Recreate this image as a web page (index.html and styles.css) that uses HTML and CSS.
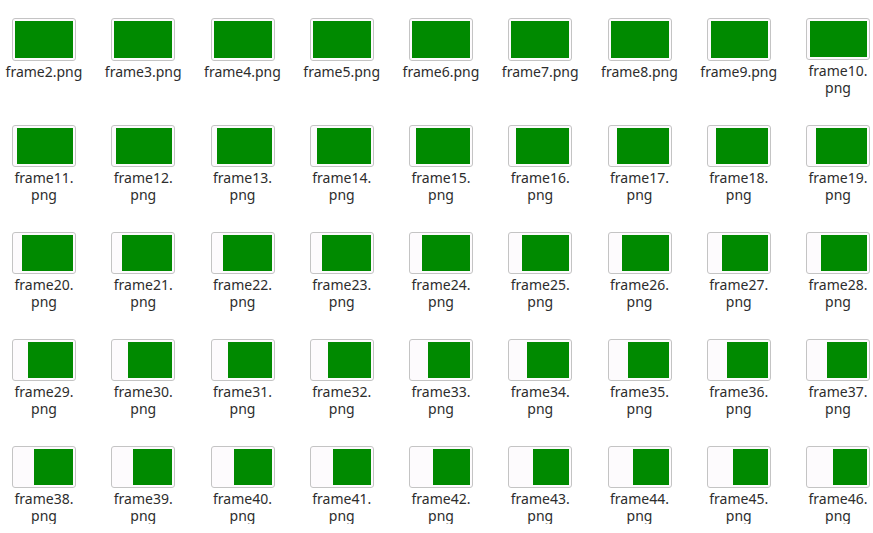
FILE: index.html
```html
<!DOCTYPE html>
<html>
<head>
<meta charset="utf-8">
<link rel="stylesheet" href="styles.css">
</head>
<body>
<div class="grid">
<div class="item"><div class="thumb"><span class="blank" style="width:0px"></span><span class="fill"></span></div><div class="label">frame2.png</div></div>
<div class="item"><div class="thumb"><span class="blank" style="width:0px"></span><span class="fill"></span></div><div class="label">frame3.png</div></div>
<div class="item"><div class="thumb"><span class="blank" style="width:0px"></span><span class="fill"></span></div><div class="label">frame4.png</div></div>
<div class="item"><div class="thumb"><span class="blank" style="width:0px"></span><span class="fill"></span></div><div class="label">frame5.png</div></div>
<div class="item"><div class="thumb"><span class="blank" style="width:0px"></span><span class="fill"></span></div><div class="label">frame6.png</div></div>
<div class="item"><div class="thumb"><span class="blank" style="width:0px"></span><span class="fill"></span></div><div class="label">frame7.png</div></div>
<div class="item"><div class="thumb"><span class="blank" style="width:0px"></span><span class="fill"></span></div><div class="label">frame8.png</div></div>
<div class="item"><div class="thumb"><span class="blank" style="width:1px"></span><span class="fill"></span></div><div class="label">frame9.png</div></div>
<div class="item"><div class="thumb"><span class="blank" style="width:1px"></span><span class="fill"></span></div><div class="label">frame10.<wbr>png</div></div>
<div class="item"><div class="thumb"><span class="blank" style="width:2px"></span><span class="fill"></span></div><div class="label">frame11.<wbr>png</div></div>
<div class="item"><div class="thumb"><span class="blank" style="width:2px"></span><span class="fill"></span></div><div class="label">frame12.<wbr>png</div></div>
<div class="item"><div class="thumb"><span class="blank" style="width:3px"></span><span class="fill"></span></div><div class="label">frame13.<wbr>png</div></div>
<div class="item"><div class="thumb"><span class="blank" style="width:4px"></span><span class="fill"></span></div><div class="label">frame14.<wbr>png</div></div>
<div class="item"><div class="thumb"><span class="blank" style="width:4px"></span><span class="fill"></span></div><div class="label">frame15.<wbr>png</div></div>
<div class="item"><div class="thumb"><span class="blank" style="width:5px"></span><span class="fill"></span></div><div class="label">frame16.<wbr>png</div></div>
<div class="item"><div class="thumb"><span class="blank" style="width:6px"></span><span class="fill"></span></div><div class="label">frame17.<wbr>png</div></div>
<div class="item"><div class="thumb"><span class="blank" style="width:6px"></span><span class="fill"></span></div><div class="label">frame18.<wbr>png</div></div>
<div class="item"><div class="thumb"><span class="blank" style="width:7px"></span><span class="fill"></span></div><div class="label">frame19.<wbr>png</div></div>
<div class="item"><div class="thumb"><span class="blank" style="width:7px"></span><span class="fill"></span></div><div class="label">frame20.<wbr>png</div></div>
<div class="item"><div class="thumb"><span class="blank" style="width:8px"></span><span class="fill"></span></div><div class="label">frame21.<wbr>png</div></div>
<div class="item"><div class="thumb"><span class="blank" style="width:9px"></span><span class="fill"></span></div><div class="label">frame22.<wbr>png</div></div>
<div class="item"><div class="thumb"><span class="blank" style="width:9px"></span><span class="fill"></span></div><div class="label">frame23.<wbr>png</div></div>
<div class="item"><div class="thumb"><span class="blank" style="width:10px"></span><span class="fill"></span></div><div class="label">frame24.<wbr>png</div></div>
<div class="item"><div class="thumb"><span class="blank" style="width:11px"></span><span class="fill"></span></div><div class="label">frame25.<wbr>png</div></div>
<div class="item"><div class="thumb"><span class="blank" style="width:11px"></span><span class="fill"></span></div><div class="label">frame26.<wbr>png</div></div>
<div class="item"><div class="thumb"><span class="blank" style="width:12px"></span><span class="fill"></span></div><div class="label">frame27.<wbr>png</div></div>
<div class="item"><div class="thumb"><span class="blank" style="width:12px"></span><span class="fill"></span></div><div class="label">frame28.<wbr>png</div></div>
<div class="item"><div class="thumb"><span class="blank" style="width:13px"></span><span class="fill"></span></div><div class="label">frame29.<wbr>png</div></div>
<div class="item"><div class="thumb"><span class="blank" style="width:14px"></span><span class="fill"></span></div><div class="label">frame30.<wbr>png</div></div>
<div class="item"><div class="thumb"><span class="blank" style="width:14px"></span><span class="fill"></span></div><div class="label">frame31.<wbr>png</div></div>
<div class="item"><div class="thumb"><span class="blank" style="width:15px"></span><span class="fill"></span></div><div class="label">frame32.<wbr>png</div></div>
<div class="item"><div class="thumb"><span class="blank" style="width:16px"></span><span class="fill"></span></div><div class="label">frame33.<wbr>png</div></div>
<div class="item"><div class="thumb"><span class="blank" style="width:16px"></span><span class="fill"></span></div><div class="label">frame34.<wbr>png</div></div>
<div class="item"><div class="thumb"><span class="blank" style="width:17px"></span><span class="fill"></span></div><div class="label">frame35.<wbr>png</div></div>
<div class="item"><div class="thumb"><span class="blank" style="width:17px"></span><span class="fill"></span></div><div class="label">frame36.<wbr>png</div></div>
<div class="item"><div class="thumb"><span class="blank" style="width:18px"></span><span class="fill"></span></div><div class="label">frame37.<wbr>png</div></div>
<div class="item"><div class="thumb"><span class="blank" style="width:19px"></span><span class="fill"></span></div><div class="label">frame38.<wbr>png</div></div>
<div class="item"><div class="thumb"><span class="blank" style="width:19px"></span><span class="fill"></span></div><div class="label">frame39.<wbr>png</div></div>
<div class="item"><div class="thumb"><span class="blank" style="width:20px"></span><span class="fill"></span></div><div class="label">frame40.<wbr>png</div></div>
<div class="item"><div class="thumb"><span class="blank" style="width:20px"></span><span class="fill"></span></div><div class="label">frame41.<wbr>png</div></div>
<div class="item"><div class="thumb"><span class="blank" style="width:21px"></span><span class="fill"></span></div><div class="label">frame42.<wbr>png</div></div>
<div class="item"><div class="thumb"><span class="blank" style="width:22px"></span><span class="fill"></span></div><div class="label">frame43.<wbr>png</div></div>
<div class="item"><div class="thumb"><span class="blank" style="width:22px"></span><span class="fill"></span></div><div class="label">frame44.<wbr>png</div></div>
<div class="item"><div class="thumb"><span class="blank" style="width:23px"></span><span class="fill"></span></div><div class="label">frame45.<wbr>png</div></div>
<div class="item"><div class="thumb"><span class="blank" style="width:24px"></span><span class="fill"></span></div><div class="label">frame46.<wbr>png</div></div>
</div>
</body>
</html>
```
FILE: styles.css
```css
html, body {
  margin: 0;
  padding: 0;
  background: #ffffff;
  overflow: hidden;
}

.grid {
  display: grid;
  grid-template-columns: repeat(9, 88px);
  grid-auto-rows: 78px;
  column-gap: 11.25px;
  row-gap: 29px;
  padding-top: 18px;
  font-family: "Noto Sans", "Open Sans", sans-serif;
  font-size: 14px;
  color: #2d2d2d;
}

.item {
  display: flex;
  flex-direction: column;
  align-items: center;
}

.thumb {
  display: flex;
  width: 58px;
  height: 37px;
  padding: 2px;
  border: 1px solid #c4c4c4;
  border-radius: 3px;
  background: #fdfbfd;
}

.blank {
  flex: none;
  height: 100%;
  background: #fdfbfd;
}

.fill {
  flex: 1;
  background: #008a00;
}

.label {
  width: 80px;
  margin-top: 2px;
  line-height: 17px;
  text-align: center;
}
```
